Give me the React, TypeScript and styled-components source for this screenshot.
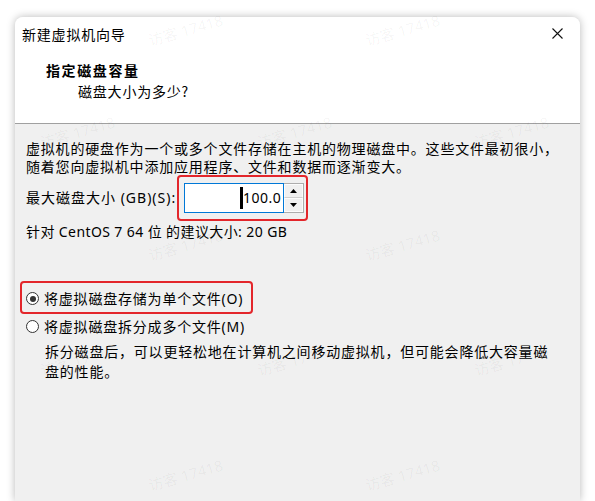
import styled, { createGlobalStyle } from 'styled-components';

const GlobalStyle = createGlobalStyle`
  html, body {
    margin: 0;
    padding: 0;
    background: #ffffff;
    overflow: hidden;
  }
  body {
    font-family: 'Noto Sans', 'Noto Sans CJK SC', sans-serif;
    font-size: 14px;
    color: #000;
  }
`;

const Page = styled.div`
  position: relative;
  width: 595px;
  height: 501px;
  overflow: hidden;
  padding: 17px 0 0 15px;
  box-sizing: border-box;
`;

const Window = styled.div`
  width: 565px;
  height: 484px;
  display: flex;
  flex-direction: column;
  border-radius: 8px 8px 0 0;
  background: #f0f0f0;
  box-shadow: 0 0 9px rgba(0, 0, 0, 0.28);
  overflow: hidden;
`;

const Header = styled.div`
  height: 106px;
  background: #ffffff;
  border-bottom: 1px solid #a0a0a0;
  display: flex;
  flex-direction: column;
`;

const TitleBar = styled.div`
  height: 32px;
  display: flex;
  align-items: center;
  justify-content: space-between;
  padding: 0 13px 0 7px;
`;

const Title = styled.span`
  font-family: 'Noto Sans CJK SC', sans-serif;
  font-size: 14px;
  letter-spacing: 0.8px;
  line-height: 18px;
  margin-top: 1px;
`;

const CloseButton = styled.span`
  display: flex;
  align-items: center;
  justify-content: center;
  width: 20px;
  height: 20px;
  margin-top: 1px;
`;

const Heading = styled.div`
  font-family: 'Noto Sans CJK SC', sans-serif;
  font-weight: 700;
  font-size: 14px;
  letter-spacing: 1.6px;
  line-height: 20px;
  padding-left: 31px;
  margin-top: 11px;
`;

const SubHeading = styled.div`
  font-family: 'Noto Sans CJK SC', sans-serif;
  font-size: 14px;
  letter-spacing: 0.8px;
  line-height: 20px;
  padding-left: 63px;
  margin-top: 1px;
`;

const Body = styled.div`
  flex: 1;
  display: flex;
  flex-direction: column;
  padding: 15px 0 0 11px;
`;

const Paragraph = styled.p`
  margin: 0;
  font-family: 'Noto Sans CJK SC', sans-serif;
  font-size: 14px;
  letter-spacing: 0.8px;
  line-height: 18px;
  white-space: nowrap;
`;

const Text = styled.span<{ $spacing?: number }>`
  font-family: 'Noto Sans', 'Noto Sans CJK SC', sans-serif;
  font-size: 14px;
  line-height: 18px;
  letter-spacing: ${(p) => p.$spacing ?? 0.4}px;
  white-space: nowrap;
`;

const SizeRow = styled.div`
  display: flex;
  align-items: center;
  gap: 1px;
`;

const Highlight = styled.div<{ $pad: string }>`
  display: inline-flex;
  align-items: center;
  border: 2px solid #e3262b;
  border-radius: 4px;
  padding: ${(p) => p.$pad};
`;

const SpinBox = styled.div`
  display: flex;
  height: 30px;
`;

const NumberInput = styled.div`
  width: 96px;
  height: 28px;
  border: 1px solid #0078d7;
  background: #fff;
  display: flex;
  align-items: center;
  justify-content: flex-end;
  padding-right: 2px;
  box-sizing: content-box;
`;

const Caret = styled.span`
  display: inline-block;
  width: 3px;
  height: 22px;
  background: #000;
`;

const Spinner = styled.div`
  width: 20px;
  display: flex;
  flex-direction: column;
  border: 1px solid #adadad;
  border-left: none;
  box-sizing: border-box;
`;

const SpinButton = styled.div<{ $top?: boolean }>`
  flex: 1;
  display: flex;
  align-items: center;
  justify-content: center;
  background: #f0f0f0;
  border: 1px solid #fcfcfc;
  border-bottom-color: ${(p) => (p.$top ? '#d0d0d0' : '#fcfcfc')};
`;

const Recommend = styled.div`
  margin-top: 2px;
  line-height: 18px;
`;

const RadioGroup = styled.div`
  display: flex;
  flex-direction: column;
  align-items: flex-start;
  margin-top: 40px;
  margin-left: -6px;
`;

const RadioRow = styled.label<{ $inset?: number }>`
  display: flex;
  align-items: center;
  gap: 5px;
  height: 25px;
  padding-left: ${(p) => p.$inset ?? 4}px;
`;

const RadioCircle = styled.span<{ $checked?: boolean }>`
  width: 11px;
  height: 11px;
  border: 1px solid #333;
  border-radius: 50%;
  display: flex;
  align-items: center;
  justify-content: center;
  background: #fff;
  &::after {
    content: '';
    width: 6px;
    height: 6px;
    border-radius: 50%;
    background: ${(p) => (p.$checked ? '#333' : 'transparent')};
  }
`;

const Description = styled(Paragraph)`
  line-height: 20px;
  padding-left: 25px;
  margin-top: 2px;
`;

const Watermark = styled.span`
  position: absolute;
  font-family: 'Noto Sans', 'Noto Sans CJK SC', sans-serif;
  font-size: 15px;
  color: rgba(0, 0, 0, 0.045);
  transform: rotate(-16deg);
  white-space: nowrap;
  pointer-events: none;
`;

const marks: [number, number][] = [];
[30, 132, 245, 360, 475].forEach((y, row) => {
  const xs = row % 2 === 0 ? [183, 400] : [75, 292, 509];
  xs.forEach((x) => marks.push([x, y]));
});

function Triangle({ up }: { up?: boolean }) {
  return (
    <svg width="7" height="4" viewBox="0 0 7 4">
      <path d={up ? 'M3.5 0 L7 4 L0 4 Z' : 'M0 0 L7 0 L3.5 4 Z'} fill="#000" />
    </svg>
  );
}

export default function App() {
  return (
    <>
      <GlobalStyle />
      <Page>
        <Window>
          <Header>
            <TitleBar>
              <Title>新建虚拟机向导</Title>
              <CloseButton>
                <svg width="11" height="11" viewBox="0 0 11 11">
                  <path d="M0.5 0.5 L10.5 10.5 M10.5 0.5 L0.5 10.5" stroke="#111" strokeWidth="1.1" />
                </svg>
              </CloseButton>
            </TitleBar>
            <Heading>指定磁盘容量</Heading>
            <SubHeading>磁盘大小为多少?</SubHeading>
          </Header>
          <Body>
            <Paragraph>
              虚拟机的硬盘作为一个或多个文件存储在主机的物理磁盘中。这些文件最初很小，
              <br />
              随着您向虚拟机中添加应用程序、文件和数据而逐渐变大。
            </Paragraph>
            <SizeRow>
              <Text $spacing={1}>最大磁盘大小 (GB)(S):</Text>
              <Highlight $pad="6px 2px 6px 5px">
                <SpinBox>
                  <NumberInput>
                    <Caret />
                    <Text $spacing={0.5}>100.0</Text>
                  </NumberInput>
                  <Spinner>
                    <SpinButton $top>
                      <Triangle up />
                    </SpinButton>
                    <SpinButton>
                      <Triangle />
                    </SpinButton>
                  </Spinner>
                </SpinBox>
              </Highlight>
            </SizeRow>
            <Recommend>
              <Text>针对 CentOS 7 64 位 的建议大小: 20 GB</Text>
            </Recommend>
            <RadioGroup>
              <Highlight $pad="3px 8px 1px 0">
                <RadioRow>
                  <RadioCircle $checked />
                  <Text $spacing={0.8}>将虚拟磁盘存储为单个文件(O)</Text>
                </RadioRow>
              </Highlight>
              <RadioRow $inset={6}>
                <RadioCircle />
                <Text $spacing={0.8}>将虚拟磁盘拆分成多个文件(M)</Text>
              </RadioRow>
              <Description>
                拆分磁盘后，可以更轻松地在计算机之间移动虚拟机，但可能会降低大容量磁
                <br />
                盘的性能。
              </Description>
            </RadioGroup>
          </Body>
        </Window>
        {marks.map(([x, y], i) => (
          <Watermark key={i} style={{ left: x - 36, top: y - 11 }}>
            访客 17418
          </Watermark>
        ))}
      </Page>
    </>
  );
}
